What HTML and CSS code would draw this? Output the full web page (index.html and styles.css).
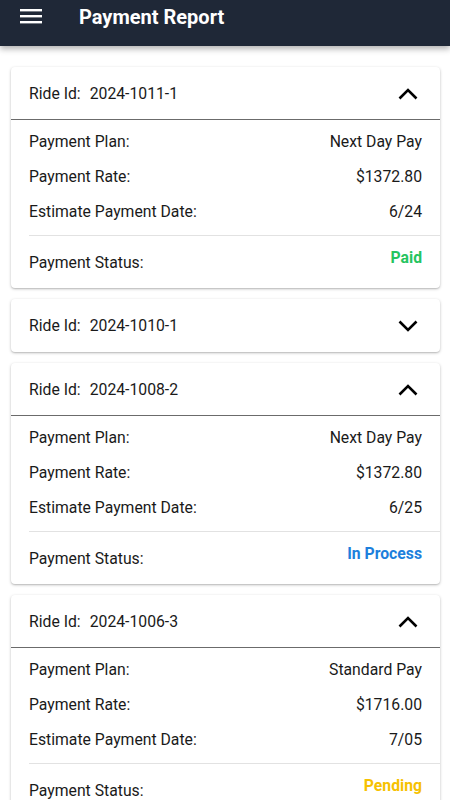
FILE: index.html
```html
<!DOCTYPE html>
<html lang="en">

<head>
    <meta charset="UTF-8">
    <meta name="viewport" content="width=device-width, initial-scale=1.0">
    <title>Payment Report</title>
    <link rel="stylesheet" href="styles.css">
</head>

<body>
    <header class="app-bar">
        <button class="menu-btn" aria-label="Menu">
            <svg width="22" height="16" viewBox="0 0 22 16">
                <rect x="0" y="1" width="22" height="2.4" fill="#fff" />
                <rect x="0" y="7" width="22" height="2.4" fill="#fff" />
                <rect x="0" y="13" width="22" height="2.4" fill="#fff" />
            </svg>
        </button>
        <h1 class="app-title">Payment Report</h1>
    </header>

    <main class="report-list">
        <!-- 2024-1011-1 -->
        <div class="ride-card open">
            <div class="ride-head">
                <span class="ride-label">Ride Id:</span>
                <span class="ride-id">2024-1011-1</span>
                <svg class="chevron" width="20" height="12" viewBox="0 0 20 12">
                    <polyline points="1.5,10.5 10,2 18.5,10.5" fill="none" stroke="#000" stroke-width="2.6" />
                </svg>
            </div>
            <div class="ride-body">
                <div class="info-row"><span>Payment Plan:</span><span>Next Day Pay</span></div>
                <div class="info-row"><span>Payment Rate:</span><span>$1372.80</span></div>
                <div class="info-row"><span>Estimate Payment Date:</span><span>6/24</span></div>
                <div class="status-row">
                    <span>Payment Status:</span>
                    <span class="status paid">Paid</span>
                </div>
            </div>
        </div>

        <!-- 2024-1010-1 -->
        <div class="ride-card">
            <div class="ride-head">
                <span class="ride-label">Ride Id:</span>
                <span class="ride-id">2024-1010-1</span>
                <svg class="chevron" width="20" height="12" viewBox="0 0 20 12">
                    <polyline points="1.5,1.5 10,10 18.5,1.5" fill="none" stroke="#000" stroke-width="2.6" />
                </svg>
            </div>
        </div>

        <!-- 2024-1008-2 -->
        <div class="ride-card open">
            <div class="ride-head">
                <span class="ride-label">Ride Id:</span>
                <span class="ride-id">2024-1008-2</span>
                <svg class="chevron" width="20" height="12" viewBox="0 0 20 12">
                    <polyline points="1.5,10.5 10,2 18.5,10.5" fill="none" stroke="#000" stroke-width="2.6" />
                </svg>
            </div>
            <div class="ride-body">
                <div class="info-row"><span>Payment Plan:</span><span>Next Day Pay</span></div>
                <div class="info-row"><span>Payment Rate:</span><span>$1372.80</span></div>
                <div class="info-row"><span>Estimate Payment Date:</span><span>6/25</span></div>
                <div class="status-row">
                    <span>Payment Status:</span>
                    <span class="status process">In Process</span>
                </div>
            </div>
        </div>

        <!-- 2024-1006-3 -->
        <div class="ride-card open">
            <div class="ride-head">
                <span class="ride-label">Ride Id:</span>
                <span class="ride-id">2024-1006-3</span>
                <svg class="chevron" width="20" height="12" viewBox="0 0 20 12">
                    <polyline points="1.5,10.5 10,2 18.5,10.5" fill="none" stroke="#000" stroke-width="2.6" />
                </svg>
            </div>
            <div class="ride-body">
                <div class="info-row"><span>Payment Plan:</span><span>Standard Pay</span></div>
                <div class="info-row"><span>Payment Rate:</span><span>$1716.00</span></div>
                <div class="info-row"><span>Estimate Payment Date:</span><span>7/05</span></div>
                <div class="status-row">
                    <span>Payment Status:</span>
                    <span class="status pending">Pending</span>
                </div>
            </div>
        </div>
    </main>
</body>

</html>
```

FILE: styles.css
```css
* {
    margin: 0;
    padding: 0;
    box-sizing: border-box;
}

body {
    font-family: Roboto, 'Noto Sans', sans-serif;
    background-color: #fff;
    color: #1a1a1a;
}

.app-bar {
    height: 46px;
    background-color: #1f2837;
    display: flex;
    align-items: center;
    padding-left: 20px;
    box-shadow: 0 3px 6px rgba(0, 0, 0, 0.3);
    position: relative;
    z-index: 2;
}

.menu-btn {
    background: none;
    border: none;
    display: flex;
    margin-top: -14px;
}

.app-title {
    color: #fff;
    font-size: 20px;
    font-weight: 700;
    margin-left: 37px;
    margin-top: -13px;
}

.report-list {
    padding: 21px 10px 0 11px;
    display: flex;
    flex-direction: column;
    gap: 11px;
}

.ride-card {
    background: #fff;
    border-radius: 4px;
    box-shadow: 0 1px 3px rgba(0, 0, 0, 0.25), 0 1px 1px rgba(0, 0, 0, 0.08);
}

.ride-head {
    height: 53px;
    display: flex;
    align-items: center;
    padding: 0 22px 0 18px;
    font-size: 15.75px;
}

.ride-card.open .ride-head {
    border-bottom: 1px solid #6b6b6b;
}

.ride-label {
    margin-right: 9px;
}

.ride-id {
    flex: 1;
}

.chevron {
    margin-top: 1px;
}

.ride-body {
    padding: 4px 0 0 18px;
    font-size: 15.75px;
}

.info-row {
    height: 35px;
    display: flex;
    align-items: center;
    justify-content: space-between;
    padding-right: 18px;
}

.status-row {
    margin-top: 6px;
    border-top: 1px solid #e2e2e2;
    height: 53px;
    display: flex;
    justify-content: space-between;
    padding: 17px 18px 0 0;
}

.status {
    font-weight: 700;
    margin-top: -5px;
}

.status.paid {
    color: #25c45f;
}

.status.process {
    color: #1d7fdc;
}

.status.pending {
    color: #f6c102;
}
```
